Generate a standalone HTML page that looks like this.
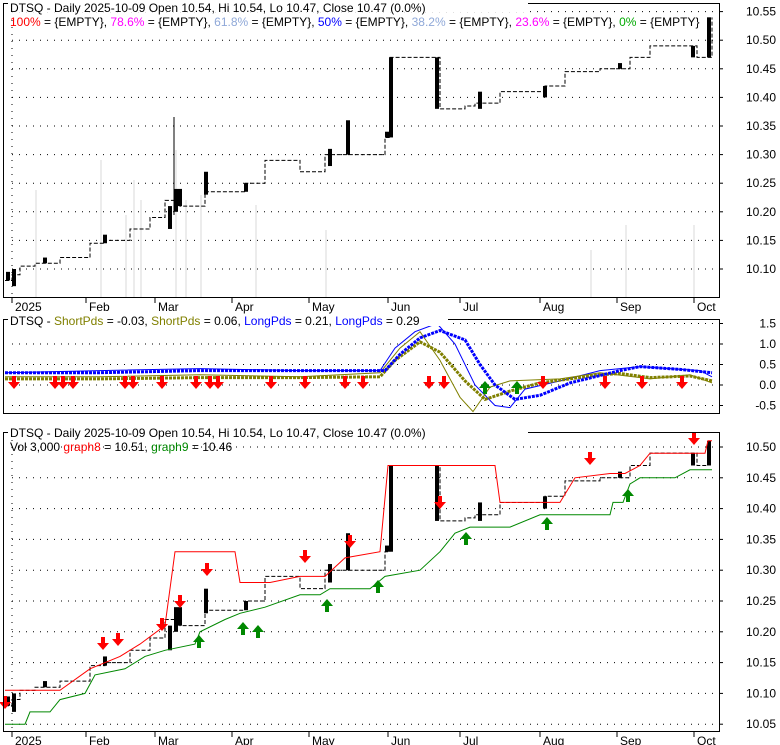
<!DOCTYPE html>
<html><head><meta charset="utf-8"><style>
html,body{margin:0;padding:0;background:#fff;}
svg{display:block;font-family:"Liberation Sans",sans-serif;}
</style></head><body>
<svg id="s" width="780" height="745" viewBox="0 0 780 745" xmlns="http://www.w3.org/2000/svg">
<rect width="780" height="745" fill="#fff"/>
<g id="g"></g>
<rect x="3.5" y="3.5" width="716" height="294" fill="none" stroke="#000"/>
<rect x="3.5" y="319.5" width="716" height="94" fill="none" stroke="#000"/>
<rect x="3.5" y="432.5" width="716" height="299" fill="none" stroke="#000"/>
<g font-size="12" fill="#000">
<rect x="8" y="0" width="520" height="12" fill="#fff"/>
<text x="10" y="12">DTSQ - Daily 2025-10-09 Open 10.54, Hi 10.54, Lo 10.47, Close 10.47 (0.0%)</text>
<text x="10" y="26"><tspan fill="#f00">100%</tspan> = {EMPTY}, <tspan fill="#f0f">78.6%</tspan> = {EMPTY}, <tspan fill="#8fa8d8">61.8%</tspan> = {EMPTY}, <tspan fill="#00f">50%</tspan> = {EMPTY}, <tspan fill="#8fa8d8">38.2%</tspan> = {EMPTY}, <tspan fill="#f0f">23.6%</tspan> = {EMPTY}, <tspan fill="#0a0">0%</tspan> = {EMPTY}</text>
<rect x="8" y="314" width="440" height="12" fill="#fff"/>
<text x="10" y="325">DTSQ - <tspan fill="#808000">ShortPds</tspan> = -0.03, <tspan fill="#808000">ShortPds</tspan> = 0.06, <tspan fill="#00f">LongPds</tspan> = 0.21, <tspan fill="#00f">LongPds</tspan> = 0.29</text>
<rect x="8" y="426" width="520" height="12" fill="#fff"/>
<text x="10" y="437">DTSQ - Daily 2025-10-09 Open 10.54, Hi 10.54, Lo 10.47, Close 10.47 (0.0%)</text>
<text x="10" y="451">Vol 3,000 <tspan fill="#f00">graph8</tspan> = 10.51, <tspan fill="#080">graph9</tspan> = 10.46</text>
</g>
<g id="labels" font-size="12" fill="#000" text-anchor="end"></g>
</svg>
<script>
var g=document.getElementById('g'),L=document.getElementById('labels'),h='',lh='';
function dots(y,x0,x1){h+='<line x1="'+x0+'" y1="'+y+'" x2="'+x1+'" y2="'+y+'" stroke="#000" stroke-dasharray="1,6"/>';}
function y1(p){return 269-(p-10.10)*572;}
function y3(p){return 447+(10.50-p)*616;}
function y2(v){return 385-v*41;}
[10.10,10.15,10.20,10.25,10.30,10.35,10.40,10.45,10.50,10.55].forEach(function(p){var y=y1(p);dots(y,12,719);h+='<line x1="719" y1="'+y+'" x2="723" y2="'+y+'" stroke="#000"/>';lh+='<text x="776" y="'+(y+4)+'">'+p.toFixed(2)+'</text>';});
[1.5,1.0,0.5,0.0,-0.5].forEach(function(v){var y=y2(v);dots(y,12,719);h+='<line x1="719" y1="'+y+'" x2="723" y2="'+y+'" stroke="#000"/>';lh+='<text x="776" y="'+(y+4)+'">'+v.toFixed(1)+'</text>';});
[10.05,10.10,10.15,10.20,10.25,10.30,10.35,10.40,10.45,10.50].forEach(function(p){var y=y3(p);dots(y,12,719);h+='<line x1="719" y1="'+y+'" x2="723" y2="'+y+'" stroke="#000"/>';lh+='<text x="776" y="'+(y+4)+'">'+p.toFixed(2)+'</text>';});
h+='<line x1="12" y1="20" x2="12" y2="297" stroke="#000" stroke-dasharray="1,6"/><line x1="12" y1="440" x2="12" y2="730" stroke="#000" stroke-dasharray="1,6"/>';
var M=[[12,'2025'],[86,'Feb'],[155,'Mar'],[232,'Apr'],[309,'May'],[388,'Jun'],[460,'Jul'],[540,'Aug'],[617,'Sep'],[694,'Oct']];
M.forEach(function(m){[298,732].forEach(function(b){h+='<line x1="'+m[0]+'" y1="'+b+'" x2="'+m[0]+'" y2="'+(b+5)+'" stroke="#000"/><text x="'+(m[0]+3)+'" y="'+(b+13)+'" font-size="12" fill="#000">'+m[1]+'</text>';});});
[[35,190],[100,160],[125,215],[133,180],[140,200],[175,150],[185,200],[200,195],[255,205],[325,230],[590,250],[625,225],[693,225]].forEach(function(v){h+='<rect x="'+v[0]+'" y="'+v[1]+'" width="2" height="'+(297-v[1])+'" fill="#ececec"/>';});
var P=[[5,10.08],[12,10.09],[20,10.105],[35,10.11],[60,10.12],[90,10.145],[105,10.15],[130,10.17],[150,10.19],[165,10.22],[180,10.21],[205,10.235],[245,10.25],[265,10.29],[300,10.27],[325,10.30],[350,10.30],[385,10.33],[390,10.47],[440,10.38],[465,10.385],[475,10.39],[500,10.41],[545,10.42],[565,10.445],[600,10.45],[630,10.47],[650,10.49],[690,10.49],[697,10.47],[708,10.47],[712,10.54]];
function step(f){var s='';for(var i=0;i<P.length;i++){var x=P[i][0],y=f(P[i][1]);s+=(i?'L'+x+' '+f(P[i-1][1])+' ':'M'+x+' '+y+' ')+'L'+x+' '+y+' ';}return s;}
h+='<path d="'+step(y1)+'" fill="none" stroke="#000" stroke-dasharray="4,2"/>';
var P3=P.slice(0,P.length-1);var Ps=P;P=P3;
h+='<path d="'+step(y3)+'" fill="none" stroke="#000" stroke-dasharray="4,2"/>';P=Ps;
var C=[[8,10.08,10.095],[14,10.07,10.1],[45,10.11,10.12],[105,10.145,10.16],[170,10.17,10.21],[176,10.2,10.24],[180,10.21,10.24],[206,10.23,10.27],[246,10.235,10.25],[330,10.28,10.31],[348,10.30,10.36],[387,10.33,10.34],[391,10.33,10.47],[437,10.38,10.47],[480,10.38,10.41],[545,10.40,10.42],[620,10.45,10.46],[693,10.47,10.49],[709,10.47,10.54]];
C.forEach(function(c){h+='<rect x="'+(c[0]-2)+'" y="'+y1(c[2])+'" width="4" height="'+(y1(c[1])-y1(c[2]))+'" fill="#000"/>';var t=Math.min(c[2],10.51);h+='<rect x="'+(c[0]-2)+'" y="'+y3(t)+'" width="4" height="'+(y3(c[1])-y3(t))+'" fill="#000"/>';});
h+='<line x1="174" y1="117" x2="174" y2="215" stroke="#000"/>';
var R=[[5,10.105],[60,10.105],[90,10.14],[120,10.16],[140,10.18],[165,10.21],[175,10.33],[235,10.33],[240,10.28],[270,10.28],[300,10.29],[325,10.29],[345,10.32],[380,10.33],[388,10.47],[495,10.47],[500,10.41],[560,10.41],[575,10.45],[610,10.457],[625,10.457],[640,10.47],[650,10.49],[705,10.49],[708,10.51],[712,10.51]];
var G=[[5,10.05],[25,10.05],[30,10.07],[50,10.07],[60,10.09],[85,10.10],[95,10.13],[125,10.14],[145,10.16],[165,10.17],[195,10.18],[200,10.20],[225,10.22],[240,10.23],[265,10.24],[300,10.26],[320,10.26],[330,10.27],[370,10.27],[385,10.29],[420,10.30],[440,10.33],[455,10.36],[470,10.37],[510,10.37],[540,10.39],[610,10.39],[613,10.41],[623,10.41],[630,10.44],[640,10.45],[675,10.45],[690,10.463],[712,10.463]];
function line(a,f){return a.map(function(p,i){return (i?'L':'M')+p[0]+' '+f(p[1]).toFixed(1);}).join(' ');}
h+='<path d="'+line(R,y3)+'" fill="none" stroke="#f00"/>';
h+='<path d="'+line(G,y3)+'" fill="none" stroke="#080"/>';
var B=[[5,0.3],[100,0.3],[200,0.35],[300,0.35],[370,0.35],[385,0.35],[400,0.75],[420,1.15],[440,1.33],[465,1.1],[480,0.5],[495,0.0],[515,-0.35],[540,-0.25],[570,0.05],[620,0.35],[640,0.45],[680,0.38],[712,0.3]];
var O=[[5,0.15],[100,0.15],[200,0.18],[300,0.18],[380,0.2],[395,0.6],[420,1.05],[440,0.8],[465,0.1],[485,-0.35],[510,-0.15],[540,0.05],[600,0.25],[620,0.28],[650,0.18],[690,0.22],[712,0.1]];
var BT=[[5,0.3],[100,0.35],[200,0.4],[300,0.35],[380,0.35],[395,0.9],[415,1.3],[437,1.5],[455,1.0],[475,0.0],[495,-0.5],[510,-0.55],[525,-0.1],[560,0.1],[600,0.35],[640,0.45],[700,0.35],[712,0.2]];
var OT=[[5,0.2],[100,0.2],[200,0.25],[300,0.2],[380,0.3],[400,0.9],[420,1.3],[440,0.6],[460,-0.3],[473,-0.65],[490,-0.05],[510,0.1],[560,0.15],[600,0.3],[650,0.15],[690,0.25],[712,0.05]];
h+='<path d="'+line(BT,y2)+'" fill="none" stroke="#00f"/>';
h+='<path d="'+line(OT,y2)+'" fill="none" stroke="#808000"/>';
h+='<path d="'+line(O,y2)+'" fill="none" stroke="#808000" stroke-width="3" stroke-dasharray="3,1"/>';
h+='<path d="'+line(B,y2)+'" fill="none" stroke="#00f" stroke-width="3" stroke-dasharray="3,1"/>';
function dn(x,y){return '<path d="M'+(x-2)+' '+(y-10)+'h4v6h4l-6 7l-6-7h4z" fill="#f00"/>';}
function up(x,y){return '<path d="M'+(x-2)+' '+(y+10)+'h4v-6h4l-6-7l-6 7h4z" fill="#080"/>';}
[14,55,63,73,125,133,162,196,210,218,271,305,345,363,429,444,543,605,642,682].forEach(function(x){h+=dn(x,386);});
[485,517].forEach(function(x){h+=up(x,384);});
[[5,706],[103,647],[118,643],[162,628],[180,605],[207,573],[305,560],[350,545],[440,506],[590,462],[694,442]].forEach(function(a){h+=dn(a[0],a[1]);});
[[199,638],[243,625],[258,628],[327,602],[378,583],[466,535],[547,520],[628,492]].forEach(function(a){h+=up(a[0],a[1]);});
g.innerHTML=h;L.innerHTML=lh;
</script>
</body></html>
